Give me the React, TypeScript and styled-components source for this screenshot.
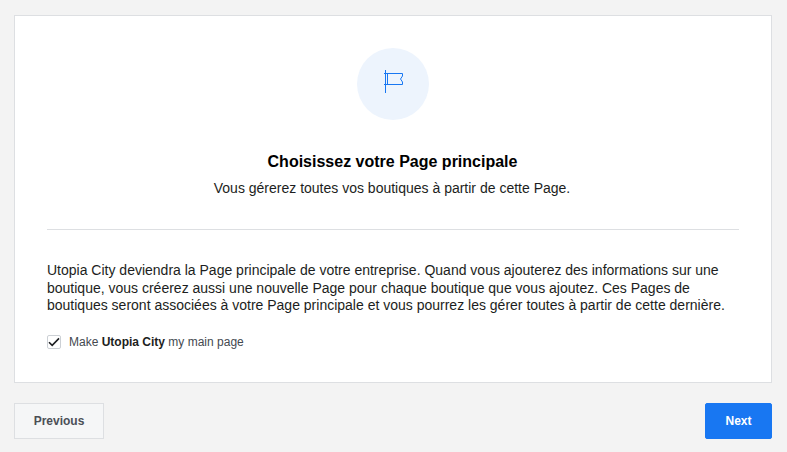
import React from "react";
import styled, { createGlobalStyle } from "styled-components";

const Global = createGlobalStyle`
  html, body { margin: 0; padding: 0; background: #f3f3f3; }
  body { font-family: "Liberation Sans", Arial, sans-serif; }
`;

const Page = styled.div`
  width: 787px;
  height: 452px;
  box-sizing: border-box;
  padding: 15px 15px 13px 14px;
  display: flex;
  flex-direction: column;
  overflow: hidden;
`;

const Card = styled.section`
  box-sizing: border-box;
  height: 368px;
  background: #fff;
  border: 1px solid #dddfe2;
  padding: 32px 32px 0;
  display: flex;
  flex-direction: column;
`;

const Hero = styled.header`
  display: flex;
  flex-direction: column;
  align-items: center;
  padding-bottom: 32px;
  border-bottom: 1px solid #dddfe2;
`;

const IconCircle = styled.div`
  width: 72px;
  height: 72px;
  border-radius: 50%;
  background: #edf4fd;
  display: flex;
  align-items: center;
  justify-content: center;
  margin-bottom: 32px;
`;

const Title = styled.h2`
  margin: 0 0 7px;
  font-size: 16px;
  line-height: 20px;
  font-weight: 700;
  color: #000;
  transform: translateX(-0.5px);
`;

const Subtitle = styled.p`
  margin: 0;
  font-size: 14px;
  line-height: 18px;
  color: #1c1e21;
  transform: translateX(-1px);
`;

const Body = styled.p`
  margin: 32px 0 0;
  font-size: 14px;
  line-height: 17.5px;
  color: #1c1e21;
`;

const CheckRow = styled.label`
  display: flex;
  align-items: center;
  gap: 8px;
  margin-top: 19px;
  font-size: 12px;
  line-height: 16px;
  color: #444950;
`;

const CheckBox = styled.span`
  box-sizing: border-box;
  width: 14px;
  height: 14px;
  border: 1px solid #ccd0d5;
  border-radius: 2px;
  background: #fff;
  display: flex;
  align-items: center;
  justify-content: center;
`;

const Strong = styled.strong`
  color: #1c1e21;
  font-weight: 700;
`;

const Footer = styled.footer`
  display: flex;
  justify-content: space-between;
  margin-top: 20px;
`;

const Button = styled.button<{ $primary?: boolean }>`
  box-sizing: border-box;
  height: 36px;
  padding: 0;
  width: ${(p) => (p.$primary ? "67px" : "90px")};
  font-family: inherit;
  font-size: 12px;
  font-weight: 700;
  border-radius: ${(p) => (p.$primary ? "2px" : "0")};
  border: 1px solid ${(p) => (p.$primary ? "#1877f2" : "#dddfe2")};
  background: ${(p) => (p.$primary ? "#1877f2" : "#f5f6f7")};
  color: ${(p) => (p.$primary ? "#fff" : "#4b4f56")};
`;

export default function App() {
  return (
    <Page>
      <Global />
      <Card>
        <Hero>
          <IconCircle>
            <svg width="20" height="28" viewBox="0 0 20 28" fill="none" stroke="#1877f2" strokeWidth="1">
              <path d="M2.5 0V23" />
              <path d="M1 3.5H19.5V6L17.5 9L19.5 12V14.5H1" />
              <path d="M4.5 3.5V14.5" />
            </svg>
          </IconCircle>
          <Title>Choisissez votre Page principale</Title>
          <Subtitle>Vous gérerez toutes vos boutiques à partir de cette Page.</Subtitle>
        </Hero>
        <Body>
          Utopia City deviendra la Page principale de votre entreprise. Quand vous ajouterez des informations sur une
          boutique, vous créerez aussi une nouvelle Page pour chaque boutique que vous ajoutez. Ces Pages de
          boutiques seront associées à votre Page principale et vous pourrez les gérer toutes à partir de cette dernière.
        </Body>
        <CheckRow>
          <CheckBox>
            <svg width="12" height="10" viewBox="0 0 12 10" fill="none" stroke="#1c1e21" strokeWidth="1.6">
              <path d="M1 5.2L4.2 8.4L11 1.4" />
            </svg>
          </CheckBox>
          <span>
            Make <Strong>Utopia City</Strong> my main page
          </span>
        </CheckRow>
      </Card>
      <Footer>
        <Button>Previous</Button>
        <Button $primary>Next</Button>
      </Footer>
    </Page>
  );
}
